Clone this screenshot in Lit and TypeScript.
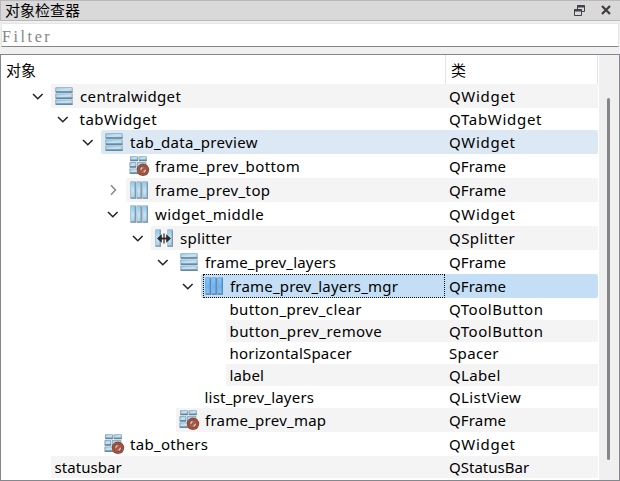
import { LitElement, html, svg, css, nothing } from "lit";
import { customElement, property } from "lit/decorators.js";
import { classMap } from "lit/directives/class-map.js";

type Kind = "v" | "h" | "broken" | "split" | "";
interface Item { name: string; cls: string; depth: number; icon: Kind; arrow?: "open" | "closed"; state?: "hover" | "selected"; track: number; }

const items: Item[] = [
  { name: "centralwidget", cls: "QWidget", depth: 0, icon: "v", arrow: "open", track: 0.36 },
  { name: "tabWidget", cls: "QTabWidget", depth: 1, icon: "", arrow: "open", track: 0.5 },
  { name: "tab_data_preview", cls: "QWidget", depth: 2, icon: "v", arrow: "open", state: "hover", track: 0.33 },
  { name: "frame_prev_bottom", cls: "QFrame", depth: 3, icon: "broken", track: 0.4 },
  { name: "frame_prev_top", cls: "QFrame", depth: 3, icon: "h", arrow: "closed", track: 0.4 },
  { name: "widget_middle", cls: "QWidget", depth: 3, icon: "h", arrow: "open", track: 0.45 },
  { name: "splitter", cls: "QSplitter", depth: 4, icon: "split", arrow: "open", track: 0.3 },
  { name: "frame_prev_layers", cls: "QFrame", depth: 5, icon: "v", arrow: "open", track: 0.18 },
  { name: "frame_prev_layers_mgr", cls: "QFrame", depth: 6, icon: "h", arrow: "open", state: "selected", track: 0.19 },
  { name: "button_prev_clear", cls: "QToolButton", depth: 7, icon: "", track: 0.37 },
  { name: "button_prev_remove", cls: "QToolButton", depth: 7, icon: "", track: 0.42 },
  { name: "horizontalSpacer", cls: "Spacer", depth: 7, icon: "", track: 0.2 },
  { name: "label", cls: "QLabel", depth: 7, icon: "", track: 0.15 },
  { name: "list_prev_layers", cls: "QListView", depth: 6, icon: "", track: 0.21 },
  { name: "frame_prev_map", cls: "QFrame", depth: 5, icon: "broken", track: 0.25 },
  { name: "tab_others", cls: "QWidget", depth: 2, icon: "broken", track: 0.3 },
  { name: "statusbar", cls: "QStatusBar", depth: 0, icon: "", track: 0.05 },
];

const clsTrack: Record<string, number> = {
  QWidget: 0.72, QTabWidget: 0.7, QFrame: 0.15, QSplitter: 0.42, QToolButton: 0.52,
  Spacer: 0.35, QLabel: 0.35, QListView: 0.38, QStatusBar: 0.02,
};

@customElement("layout-icon")
class LayoutIcon extends LitElement {
  @property() kind: Kind = "v";
  @property({ type: Boolean }) active = false;

  static styles = css`
    :host { display: block; width: 22px; height: 22px; }
    svg { display: block; }
  `;

  private hbar(x: number, y: number, w: number, h: number) {
    return svg`
      <rect x=${x} y=${y} width=${w} height=${h} rx=".8" fill="#8ea5b8"/>
      <rect x=${x + 0.9} y=${y + 0.8} width=${w - 1.9} height=${h - 2.3} fill="url(#g)"/>
      <path d="M${x + 0.5} ${y + h - 0.8}h${w - 0.6}" stroke="#6b8296" stroke-width="1.4"/>`;
  }

  private vbar(x: number, y: number, w: number, h: number) {
    return svg`
      <rect x=${x} y=${y} width=${w} height=${h} rx=".8" fill=${this.active ? "#76a5d3" : "#a3b7c6"}/>
      <rect x=${x + 0.9} y=${y + 1} width=${w - 2.2} height=${h - 2.2} fill="url(#g)"/>
      <path d="M${x + w - 0.7} ${y + 1}v${h - 1}M${x + 0.5} ${y + h - 0.5}h${w - 0.5}" stroke=${this.active ? "#5a86b0" : "#8096a8"} stroke-width="1.2"/>`;
  }

  private shape() {
    switch (this.kind) {
      case "v":
        return svg`${this.hbar(1.3, 2.2, 17.4, 5.6)}${this.hbar(1.3, 8.4, 17.4, 5.6)}${this.hbar(1.3, 14.5, 17.4, 5.5)}`;
      case "h":
        return svg`${this.vbar(1.2, 2.3, 5.8, 17.4)}${this.vbar(7.3, 2.3, 5.6, 17.4)}${this.vbar(13.2, 2.3, 5.8, 17.4)}`;
      case "split":
        return svg`${this.vbar(1.2, 2.3, 5.8, 17.4)}${this.vbar(13.2, 2.3, 5.8, 17.4)}
          <path d="M10 6.5v10" stroke="#2a2a2a" stroke-width="1.2"/>
          <path d="M5 11.5h10" stroke="#2a2a2a" stroke-width="1.8"/>
          <path d="M3 11.5l4.8-4.2v8.4zM17 11.5l-4.8-4.2v8.4z" fill="#2a2a2a"/>`;
      default:
        return svg`
          ${this.hbar(1, 1.2, 8, 5)}${this.hbar(9.5, 1.2, 8.3, 5)}
          ${this.hbar(0.4, 7, 6.9, 5.7)}${this.hbar(7.8, 7, 9.6, 5.7)}
          ${this.hbar(0.4, 13.4, 9.2, 5.6)}
          <circle cx="14" cy="14.8" r="6.2" fill="#8a4330"/>
          <circle cx="14" cy="14.8" r="5.4" fill="#b4523a"/>
          <circle cx="14" cy="14.8" r="3.8" fill="#8f8383" stroke="#7a3527" stroke-width=".7"/>
          <path d="M11 17.6l6-5.6" stroke="#bb4f34" stroke-width="2"/>
          <path d="M11.6 14.6l1.5-2.2M14.9 17.4l1.7-2.2" stroke="#c3cdd6" stroke-width="1.1"/>`;
    }
  }

  render() {
    const tall = this.kind === "h" || this.kind === "split";
    return html`<svg width="22" height="22" viewBox="0 0 22 22">
      <defs><linearGradient id="g" x1="0" y1="0" x2=${tall ? 0 : 1} y2="1">
        <stop offset="0" stop-color=${this.active ? "#86c5ff" : "#8ccdf0"}/>
        <stop offset=".55" stop-color=${this.active ? "#68b4f6" : "#c2e5f7"}/>
        <stop offset="1" stop-color=${this.active ? "#87c2f0" : "#a9d3ea"}/>
      </linearGradient></defs>${this.shape()}
    </svg>`;
  }
}

@customElement("app-root")
class AppRoot extends LitElement {
  static styles = css`
    :host { display: flex; flex-direction: column; box-sizing: border-box; width: 620px; height: 481px; overflow: hidden;
      background: #f0f0f0; color: #000; font: 15px "Noto Sans", "Noto Sans CJK SC", sans-serif; }
    * { box-sizing: border-box; }
    svg { display: block; flex: none; }
    .title { display: flex; align-items: center; height: 21px; flex: none; padding: 0 9px 1px 4px; background: #d9d9d9;
      border: 1px solid #b9b9b9; border-width: 1px 0 1px 1px; font: 15px/18px "Noto Sans CJK SC", sans-serif; }
    .title span { flex: 1; }
    .title svg + svg { margin-left: 16px; }
    .filter { height: 24px; flex: none; margin: 2px 1px 0; background: #fff; border: 1px solid #e5e5e5;
      border-bottom-color: #868686; color: #858585; font: 16px/25px "Liberation Serif", serif; letter-spacing: 2.6px; }
    .tree { display: flex; flex: 1; margin-top: 7px; border: 1px solid #828790; overflow: hidden; }
    .list { width: 598px; background: #fff; border-right: 1px solid #fff; }
    .head { display: flex; height: 29px; font: 15px/30px "Noto Sans CJK SC", sans-serif; }
    .head div { border-right: 1px solid #e3e3e3; padding-left: 5px; }
    .head .first { width: 445px; }
    .head .second { flex: 1; }
    .row { display: flex; height: 22px; line-height: 21px; white-space: pre; }
    .row.tall { height: 24px; line-height: 23px; }
    .branch { display: flex; align-items: center; justify-content: flex-end; padding-right: 7px; }
    .cells { display: flex; flex: 1; min-width: 0; }
    .odd .cells { background: #f4f4f4; }
    .hover .cells { background: #dce9f4; border-radius: 2px; }
    .selected .cells { background: #c4dff5; border-radius: 2px; }
    .name { display: flex; flex: 1; align-items: center; padding-left: 3px; }
    .name span { padding-left: .5px; }
    .tall .name span { padding-left: 4px; }
    .selected .name { outline: 1px dotted #111; outline-offset: -1px; margin: 0 1px 0 2px; padding-left: 1px; }
    .cls { width: 152px; padding: 1px 0 0 3px; }
    .bar { flex: 1; background: #f0f0f0; padding: 43px 0 0 8px; }
    .thumb { width: 3px; height: 362px; border-radius: 2px; background: #868686; }
  `;

  private row(it: Item, i: number) {
    const cls = { row: true, tall: it.icon !== "", odd: i % 2 === 0, hover: it.state === "hover", selected: it.state === "selected" };
    return html`<div class=${classMap(cls)}>
      <div class="branch" style="width:${50 + it.depth * 25}px">${it.arrow
        ? html`<svg width="12" height="12" viewBox="0 0 12 12" fill="none" stroke=${it.arrow === "open" ? "#222" : "#888"} stroke-width="1.5">
            <path d=${it.arrow === "open" ? "M1 4l4.8 4.8L10.6 4" : "M4 1.3l4.5 4.7L4 10.7"}/></svg>`
        : nothing}</div>
      <div class="cells">
        <div class="name">${it.icon ? html`<layout-icon .kind=${it.icon} .active=${it.state === "selected"}></layout-icon>` : nothing}<span style="letter-spacing:${it.track}px">${it.name}</span></div>
        <div class="cls" style="letter-spacing:${clsTrack[it.cls]}px">${it.cls}</div>
      </div>
    </div>`;
  }

  render() {
    return html`
      <div class="title"><span>对象检查器</span>
        <svg width="11" height="11" viewBox="0 0 11 11" fill="none" stroke="#45414a">
          <path d="M3.5 4V.5h7v6H8"/><path d="M3 1.5h8M0 5.5h8" stroke-width="2"/><path d="M.5 4.5h7v6h-7z"/></svg>
        <svg width="10" height="10" viewBox="0 0 10 10" stroke="#403a3a" stroke-width="2.2"><path d="M1 1l8 8M9 1l-8 8"/></svg>
      </div>
      <div class="filter">Filter</div>
      <div class="tree">
        <div class="list">
          <div class="head"><div class="first">对象</div><div class="second">类</div></div>
          ${items.map((it, i) => this.row(it, i))}
        </div>
        <div class="bar"><div class="thumb"></div></div>
      </div>`;
  }
}
